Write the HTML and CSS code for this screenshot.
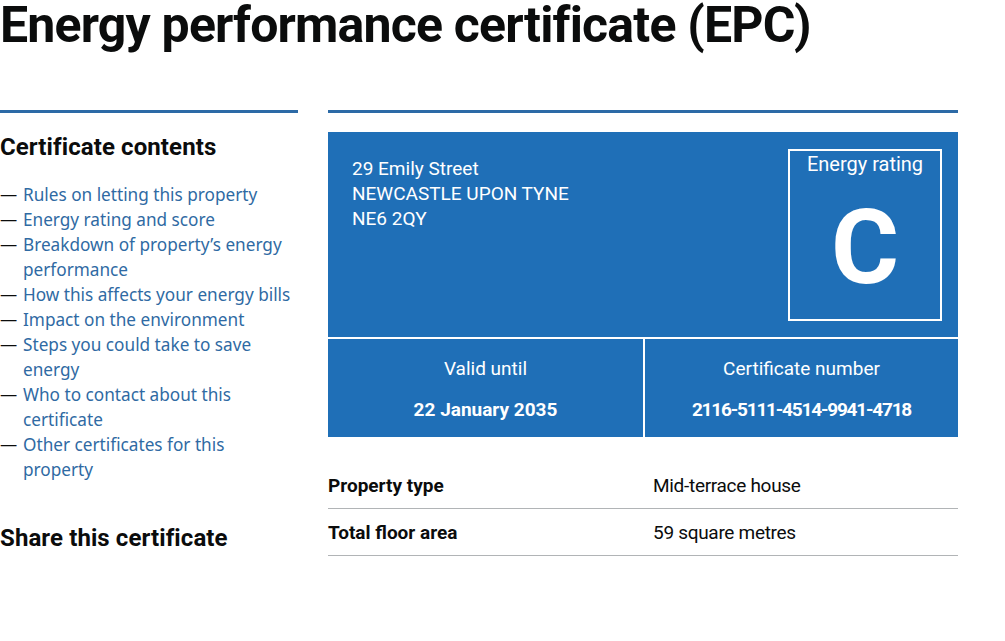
FILE: index.html
```html
<!DOCTYPE html>
<html lang="en">
<head>
<meta charset="utf-8">
<title>Energy performance certificate (EPC)</title>
<link rel="stylesheet" href="styles.css">
</head>
<body>
<div class="page">
  <h1 class="title">Energy performance certificate (EPC)</h1>
  <div class="columns">
    <aside class="sidebar">
      <h2 class="side-heading">Certificate contents</h2>
      <ul class="contents">
        <li><span class="dash">—</span><a href="#">Rules on letting this property</a></li>
        <li><span class="dash">—</span><a href="#">Energy rating and score</a></li>
        <li><span class="dash">—</span><a href="#">Breakdown of property’s energy performance</a></li>
        <li><span class="dash">—</span><a href="#">How this affects your energy bills</a></li>
        <li><span class="dash">—</span><a href="#">Impact on the environment</a></li>
        <li><span class="dash">—</span><a href="#">Steps you could take to save energy</a></li>
        <li><span class="dash">—</span><a href="#">Who to contact about this certificate</a></li>
        <li><span class="dash">—</span><a href="#">Other certificates for this property</a></li>
      </ul>
      <h2 class="side-heading share">Share this certificate</h2>
    </aside>
    <main class="main">
      <div class="epc">
        <div class="epc-top">
          <p class="address">29 Emily Street<br>NEWCASTLE UPON TYNE<br>NE6 2QY</p>
          <div class="rating">
            <p class="rating-label">Energy rating</p>
            <p class="rating-letter">C</p>
          </div>
        </div>
        <div class="epc-bottom">
          <div class="epc-cell">
            <p class="cell-label">Valid until</p>
            <p class="cell-value">22 January 2035</p>
          </div>
          <div class="epc-cell">
            <p class="cell-label">Certificate number</p>
            <p class="cell-value cell-value-number">2116-5111-4514-9941-4718</p>
          </div>
        </div>
      </div>
      <dl class="summary">
        <div class="summary-row">
          <dt>Property type</dt>
          <dd>Mid-terrace house</dd>
        </div>
        <div class="summary-row">
          <dt>Total floor area</dt>
          <dd>59 square metres</dd>
        </div>
      </dl>
    </main>
  </div>
</div>
</body>
</html>
```

FILE: styles.css
```css
* { box-sizing: border-box; }
html, body { margin: 0; padding: 0; background: #ffffff; }
body {
  font-family: "Roboto", "Liberation Sans", sans-serif;
  color: #0b0c0c;
}
.page { width: 958px; }
.title {
  margin: 0;
  height: 110px;
  font-size: 50px;
  line-height: 50px;
  font-weight: 700;
  letter-spacing: -0.8px;
}
.columns {
  display: grid;
  grid-template-columns: 298px 630px;
  column-gap: 30px;
}
.sidebar { border-top: 3px solid #2c6aa6; }
.main { border-top: 3px solid #2c6aa6; padding-top: 19px; }
.side-heading {
  margin: 19px 0 0;
  font-size: 24px;
  line-height: 30px;
  font-weight: 700;
  letter-spacing: 0.1px;
}
.contents {
  list-style: none;
  margin: 20px 0 0;
  padding: 0 5px 0 0;
  font-family: "Noto Sans", sans-serif;
  font-size: 17.2px;
  line-height: 25px;
}
.contents li { display: flex; }
.dash { width: 23px; flex: none; color: #0b0c0c; }
.contents a { color: #2f6aa3; text-decoration: none; }
.share { margin-top: 41px; }
.epc { background: #1f6fb7; color: #ffffff; }
.epc-top {
  display: flex;
  justify-content: space-between;
  padding: 17px 16px 16px 24px;
  border-bottom: 2px solid #ffffff;
}
.address {
  margin: 7px 0 0;
  font-size: 19px;
  line-height: 25px;
}
.rating {
  width: 154px;
  height: 172px;
  border: 2px solid #ffffff;
  text-align: center;
}
.rating-label {
  margin: 1px 0 0;
  font-size: 20px;
  line-height: 25px;
}
.rating-letter {
  margin: 21px 0 0;
  font-size: 104px;
  line-height: 100px;
  font-weight: 700;
}
.epc-bottom {
  display: grid;
  grid-template-columns: 315px 315px;
}
.epc-cell {
  height: 98px;
  text-align: center;
  padding-top: 17px;
}
.epc-cell + .epc-cell { border-left: 2px solid #ffffff; }
.cell-label {
  margin: 0;
  font-size: 19px;
  line-height: 25px;
}
.cell-value {
  margin: 16px 0 0;
  font-size: 19px;
  line-height: 25px;
  font-weight: 700;
}
.cell-value-number { letter-spacing: -1.2px; }
.summary { margin: 25px 0 0; }
.summary-row {
  display: grid;
  grid-template-columns: 325px 1fr;
  padding: 11px 0 10px;
  border-bottom: 1px solid #b1b4b6;
  font-size: 19px;
  line-height: 25px;
  letter-spacing: -0.3px;
}
.summary dt { font-weight: 700; letter-spacing: 0; }
.summary dd { margin: 0; }
```
